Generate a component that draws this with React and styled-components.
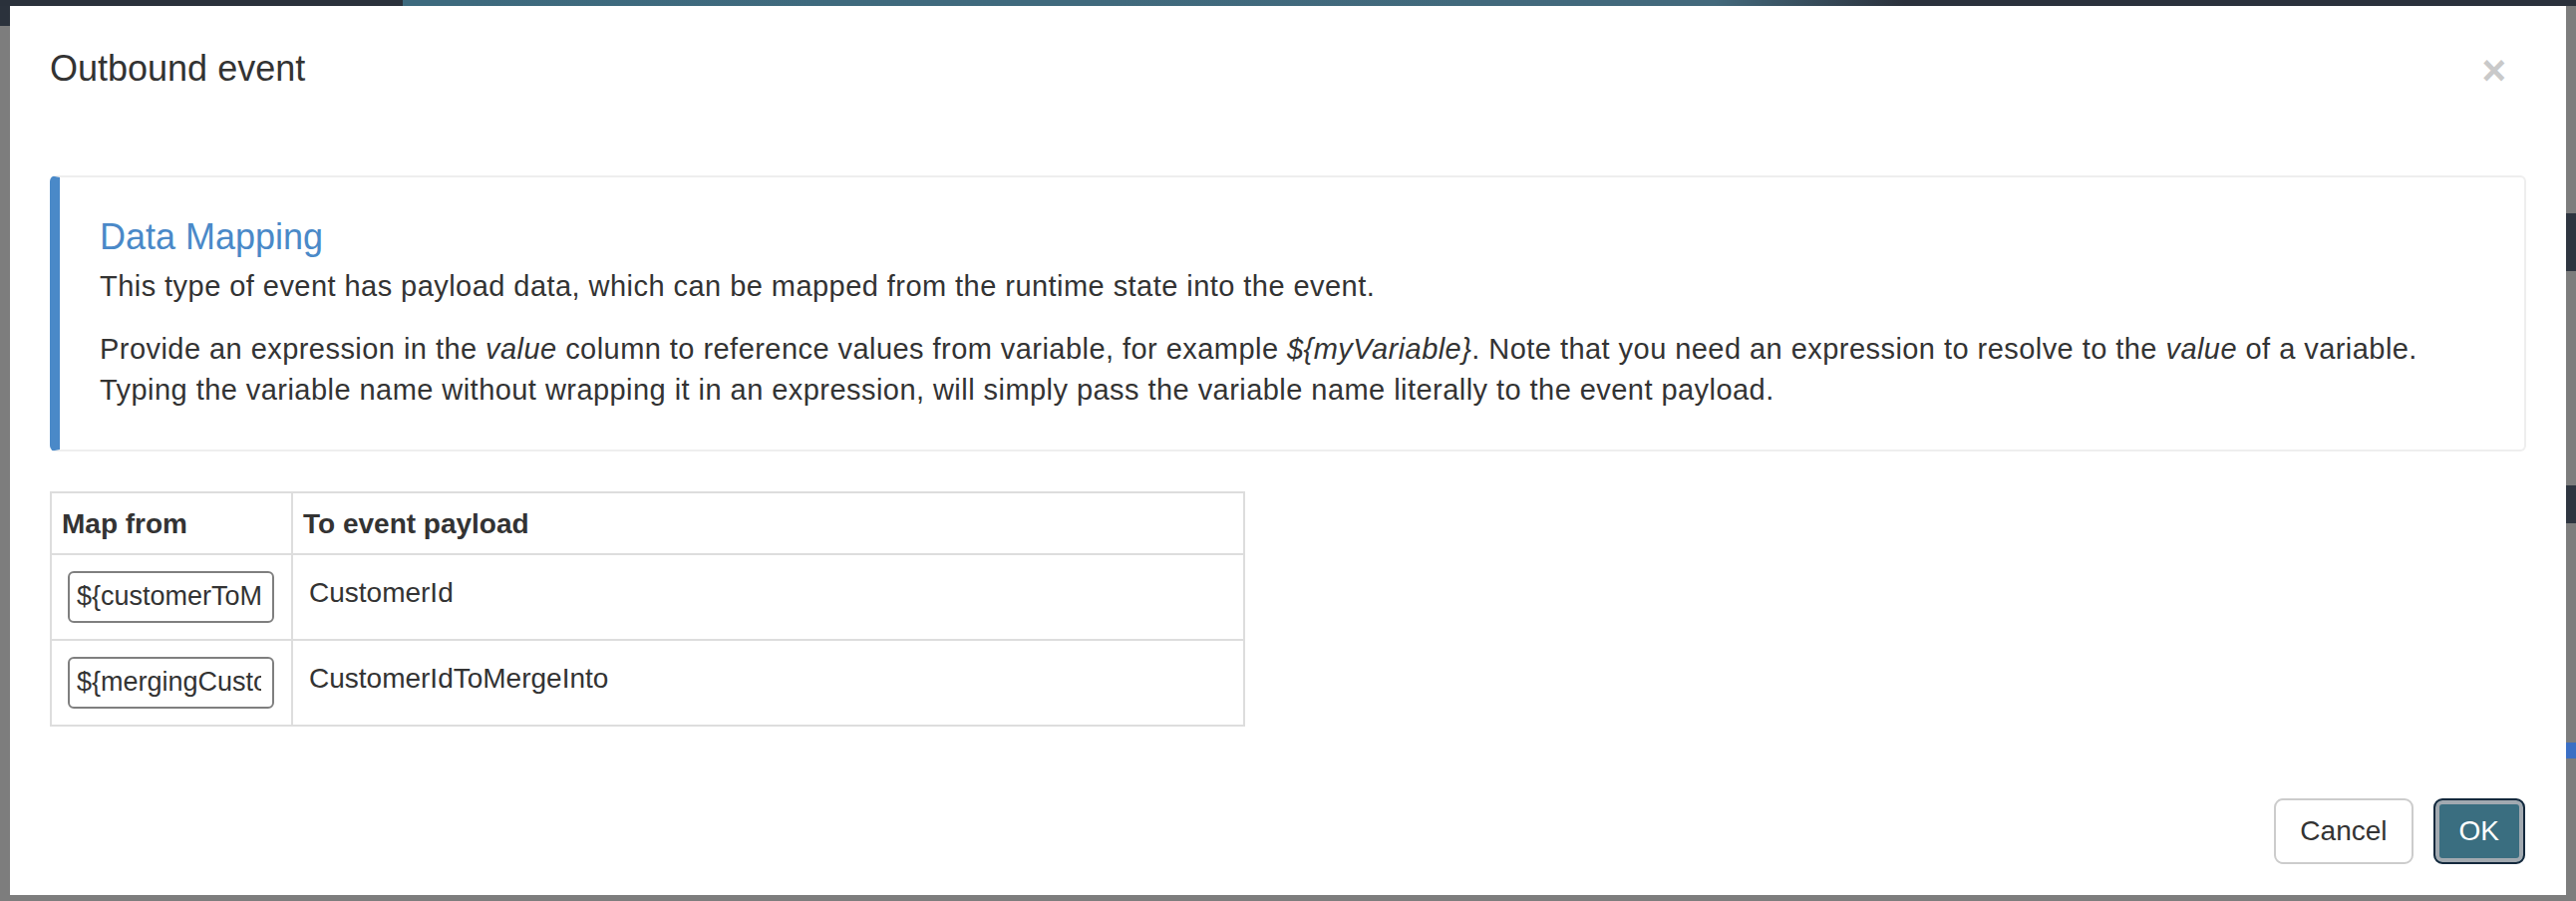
import React from "react";
import styled, { createGlobalStyle } from "styled-components";

// ================= Global =================

const GlobalStyle = createGlobalStyle`
  html, body {
    margin: 0;
    padding: 0;
  }
  body {
    font-family: "Liberation Sans", Arial, Helvetica, sans-serif;
    color: #333333;
    overflow: hidden;
  }
  * {
    box-sizing: border-box;
  }
`;

// ================= Backdrop =================

const Backdrop = styled.div`
  width: 100vw;
  height: 100vh;
  padding: 6px 10px;
  display: flex;
  background-color: #7d7d7d;
  /* the page behind the overlay: top nav strip + side hints */
  background-image:
    linear-gradient(90deg, #2a313b 0, #2a313b 404px, #3d6a7e 404px, #43697c 1720px, #2b313c 1910px, #2b313c 100%),
    linear-gradient(#2b323c, #2b323c),
    linear-gradient(#2e3540, #2e3540),
    linear-gradient(#2e3540, #2e3540),
    linear-gradient(#3b6fc4, #3b6fc4);
  background-size:
    100% 6px,
    10px 26px,
    10px 58px,
    10px 38px,
    10px 16px;
  background-position:
    0 0,
    0 0,
    right 0 top 214px,
    right 0 top 487px,
    right 0 top 745px;
  background-repeat: no-repeat;
`;

// ================= Modal =================

const Modal = styled.div`
  flex: 1;
  display: flex;
  flex-direction: column;
  background: #ffffff;
`;

const Header = styled.div`
  display: flex;
  align-items: flex-start;
  justify-content: space-between;
  padding: 43px 40px 0 40px;
`;

const Title = styled.h4`
  margin: 0;
  font-size: 36px;
  line-height: 1.1;
  font-weight: 400;
  color: #333333;
`;

const CloseButton = styled.button`
  margin: 1px 20px 0 0;
  padding: 0;
  border: 0;
  background: transparent;
  font-family: "Liberation Sans", Arial, sans-serif;
  font-size: 42px;
  line-height: 1;
  font-weight: 700;
  color: #c9c9c9;
  cursor: pointer;
`;

const Body = styled.div`
  padding: 84px 40px 0 40px;
`;

const Callout = styled.div`
  border: 2px solid #eeeeee;
  border-left: 10px solid #4a89c8;
  border-radius: 6px;
  padding: 40px 40px 39px 40px;
`;

const CalloutTitle = styled.h4`
  margin: 0 0 9px;
  font-size: 36px;
  line-height: 1.1;
  font-weight: 400;
  color: #4a89c8;
`;

const Paragraph = styled.p`
  margin: 0 0 22px;
  font-size: 29px;
  line-height: 41px;
  letter-spacing: 0.45px;
  color: #333333;

  &:last-child {
    margin-bottom: 0;
  }
`;

// ================= Table =================

const MappingTable = styled.table`
  margin-top: 40px;
  width: 1199px;
  border-collapse: collapse;
  border: 2px solid #dddddd;
`;

const HeadCell = styled.th`
  text-align: left;
  padding: 16px 10px 15px;
  font-size: 28px;
  line-height: 29px;
  font-weight: 700;
  color: #333333;
  border: 2px solid #dddddd;
  width: ${({ $width }) => $width || "auto"};
`;

const Cell = styled.td`
  vertical-align: top;
  padding: 16px;
  font-size: 28px;
  line-height: 43px;
  color: #333333;
  border: 2px solid #dddddd;
`;

const ValueInput = styled.input`
  display: block;
  width: 207px;
  height: 52px;
  padding: 0 11px 0 7px;
  border: 2px solid #7f7f7f;
  border-radius: 6px;
  font-family: "Liberation Sans", Arial, sans-serif;
  font-size: 27px;
  color: #333333;
  background: #ffffff;
  outline: none;
`;

// ================= Footer =================

const Footer = styled.div`
  margin-top: auto;
  display: flex;
  justify-content: flex-end;
  gap: 20px;
  padding: 0 41px 31px 40px;
`;

const Button = styled.button`
  height: 66px;
  padding: 0 24px;
  border-radius: 9px;
  font-family: "Liberation Sans", Arial, sans-serif;
  font-size: 28px;
  line-height: 1;
  cursor: pointer;
  color: ${({ $primary }) => ($primary ? "#ffffff" : "#333333")};
  background: ${({ $primary }) => ($primary ? "#3a6e80" : "#ffffff")};
  border: 2px solid ${({ $primary }) => ($primary ? "#14293d" : "#cccccc")};
  box-shadow: ${({ $primary }) => ($primary ? "inset 0 0 0 4px #a1a9b0" : "none")};
  min-width: ${({ $primary }) => ($primary ? "92px" : "137px")};
`;

// ================= Data =================

const mappings = [
  { id: 1, from: "${customerToMergeId}", to: "CustomerId" },
  { id: 2, from: "${mergingCustomerId}", to: "CustomerIdToMergeInto" },
];

// ================= Main Component =================

const App = () => {
  return (
    <>
      <GlobalStyle />
      <Backdrop>
        <Modal>
          <Header>
            <Title>Outbound event</Title>
            <CloseButton aria-label="Close">×</CloseButton>
          </Header>

          <Body>
            <Callout>
              <CalloutTitle>Data Mapping</CalloutTitle>
              <Paragraph>
                This type of event has payload data, which can be mapped from the runtime state into the event.
              </Paragraph>
              <Paragraph>
                Provide an expression in the <em>value</em> column to reference values from variable, for example{" "}
                <em>{"${myVariable}"}</em>. Note that you need an expression to resolve to the <em>value</em> of a
                variable. Typing the variable name without wrapping it in an expression, will simply pass the variable
                name literally to the event payload.
              </Paragraph>
            </Callout>

            <MappingTable>
              <thead>
                <tr>
                  <HeadCell $width="242px">Map from</HeadCell>
                  <HeadCell>To event payload</HeadCell>
                </tr>
              </thead>
              <tbody>
                {mappings.map((row) => (
                  <tr key={row.id}>
                    <Cell>
                      <ValueInput type="text" defaultValue={row.from} />
                    </Cell>
                    <Cell>{row.to}</Cell>
                  </tr>
                ))}
              </tbody>
            </MappingTable>
          </Body>

          <Footer>
            <Button>Cancel</Button>
            <Button $primary>OK</Button>
          </Footer>
        </Modal>
      </Backdrop>
    </>
  );
};

export default App;
